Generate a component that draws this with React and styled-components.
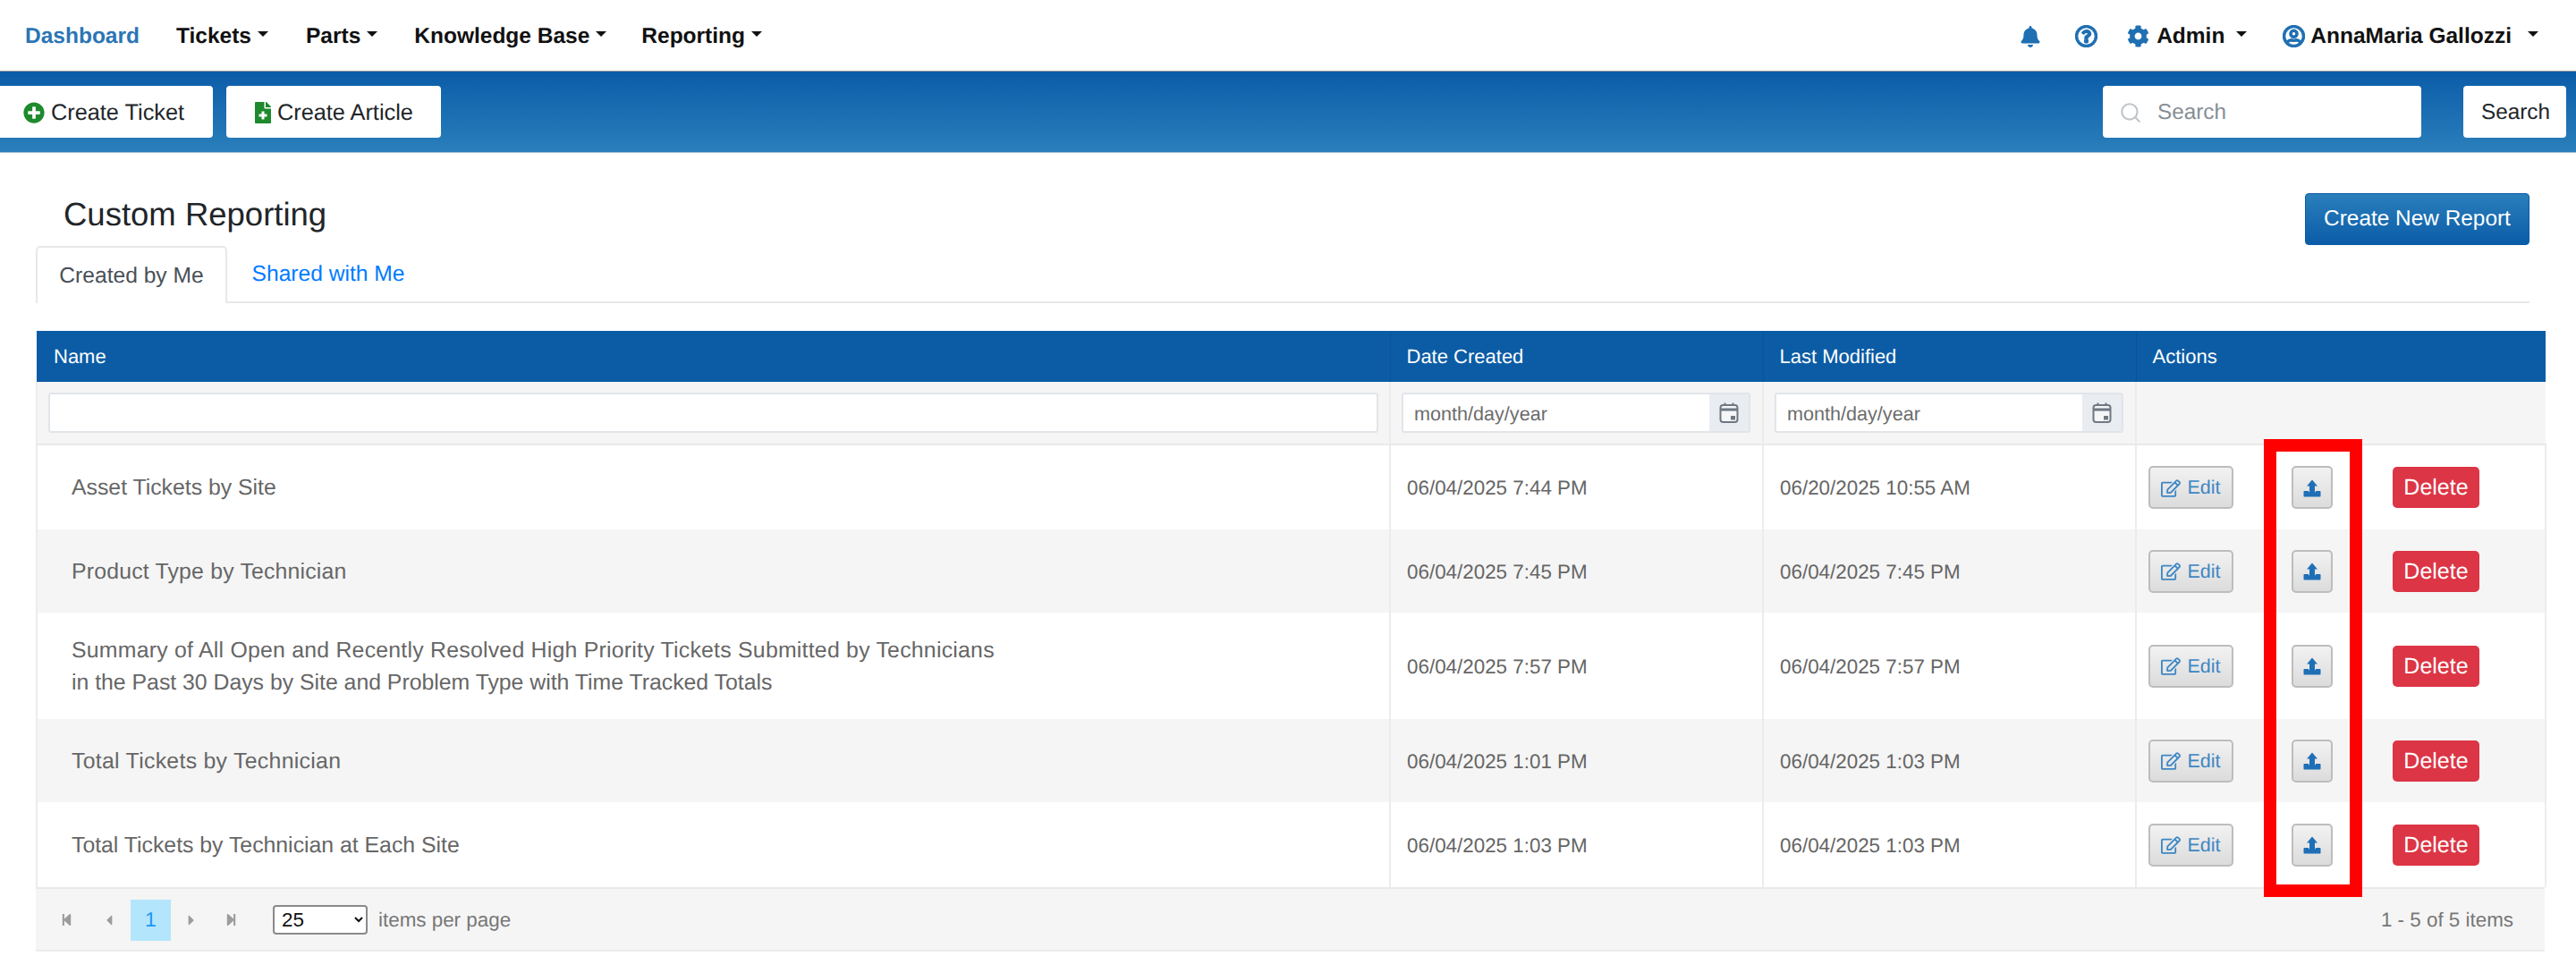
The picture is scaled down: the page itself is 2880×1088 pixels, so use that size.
import styled, { createGlobalStyle } from 'styled-components'
import {
  FaPlusCircle,
  FaFileMedical,
  FaBell,
  FaRegQuestionCircle,
  FaCog,
  FaRegUserCircle,
  FaRegEdit,
  FaStepBackward,
  FaStepForward,
  FaCaretLeft,
  FaCaretRight,
} from 'react-icons/fa'
import { FiSearch } from 'react-icons/fi'

const GlobalStyle = createGlobalStyle`
  html, body {
    margin: 0;
    padding: 0;
    background: #ffffff;
  }
  body {
    font-family: "Liberation Sans", Arial, sans-serif;
    color: #212529;
    text-rendering: geometricPrecision;
  }
`

const Page = styled.div`
  width: 2880px;
  height: 1088px;
  overflow: hidden;
`

const TopNav = styled.nav`
  box-sizing: border-box;
  height: 80px;
  display: flex;
  align-items: center;
  padding: 2px 0 0 28px;
  border-bottom: 1px solid #9a9a9a;
  font-size: 24.5px;
  font-weight: 700;
`

const NavLink = styled.span`
  display: flex;
  align-items: center;
  margin-left: ${(props) => props.$left || 0}px;
  color: ${(props) => (props.$active ? '#2b75b5' : '#111111')};
`

const Caret = styled.i`
  display: inline-block;
  margin-left: ${(props) => props.$left || 7}px;
  margin-top: -5px;
  border-top: 6px solid #111111;
  border-left: 6px solid transparent;
  border-right: 6px solid transparent;
`

const NavRight = styled.div`
  display: flex;
  align-items: center;
  margin-left: auto;
  padding-right: 42px;
`

const NavIcon = styled.span`
  display: inline-flex;
  align-items: center;
  color: #1f6fb2;
  font-size: ${(props) => props.$size || 24}px;
  margin-left: ${(props) => props.$left || 0}px;
  margin-right: ${(props) => props.$right || 0}px;
  svg {
    stroke: currentColor;
    stroke-width: ${(props) => (props.$bold ? 24 : 0)}px;
  }
`

const Toolbar = styled.div`
  box-sizing: border-box;
  height: 91px;
  display: flex;
  align-items: center;
  background: linear-gradient(180deg, #0b5ca8 0%, #2a7fbb 100%);
  border-bottom: 1px solid #9fc3dd;
`

const ToolButton = styled.div`
  box-sizing: border-box;
  display: flex;
  align-items: center;
  height: 58px;
  width: ${(props) => props.$width}px;
  margin-left: ${(props) => props.$left || 0}px;
  padding-left: ${(props) => props.$pad}px;
  padding-top: 2px;
  gap: 7px;
  background: #ffffff;
  border-radius: ${(props) => (props.$flush ? '0 4px 4px 0' : '4px')};
  font-size: 25.3px;
  color: #212529;
`

const ArticleIcon = styled(FaFileMedical)`
  width: 18px;
  height: 24px;
`

const SearchBox = styled.div`
  box-sizing: border-box;
  display: flex;
  align-items: center;
  gap: 17px;
  height: 58px;
  width: 356px;
  margin-left: auto;
  padding: 2px 0 0 18px;
  background: #ffffff;
  border-radius: 4px;
  font-size: 24.3px;
  color: #868e96;
  svg {
    color: #c0c5ca;
  }
`

const SearchButton = styled(ToolButton)`
  margin-right: 11px;
  font-size: 24.3px;
`

const Content = styled.main`
  padding: 45px 35px 0 40px;
`

const TitleRow = styled.div`
  display: flex;
  justify-content: space-between;
  align-items: flex-start;
  height: 59px;
`

const Title = styled.h1`
  margin: 0 0 0 31px;
  padding-top: 3px;
  font-size: 36.5px;
  line-height: 42px;
  font-weight: 400;
  color: #212529;
`

const PrimaryButton = styled.div`
  box-sizing: border-box;
  display: flex;
  align-items: center;
  justify-content: center;
  width: 251px;
  height: 58px;
  margin-right: 17px;
  border-radius: 4px;
  border: 1px solid #0b5ca8;
  background: linear-gradient(180deg, #2a7fbb 0%, #0b5ca8 100%);
  color: #ffffff;
  font-size: 24.4px;
`

const Tabs = styled.div`
  box-sizing: border-box;
  display: flex;
  height: 64px;
  margin-right: 17px;
  border-bottom: 2px solid #e6e8eb;
`

const Tab = styled.div`
  box-sizing: border-box;
  height: 64px;
  width: ${(props) => props.$width}px;
  padding-top: 18px;
  text-align: center;
  font-size: 24.6px;
  line-height: 28px;
  color: ${(props) => (props.$active ? '#495057' : '#007bff')};
  background: ${(props) => (props.$active ? '#ffffff' : 'transparent')};
  border: ${(props) => (props.$active ? '2px solid #e6e8eb' : 'none')};
  border-bottom: none;
  border-radius: 5px 5px 0 0;
`

const TableWrap = styled.div`
  position: relative;
  margin-top: 31px;
  width: 2805px;
`

const Table = styled.table`
  width: 100%;
  table-layout: fixed;
  border-collapse: collapse;
  font-size: 22.4px;
  color: #666666;
`

const HeadCell = styled.th`
  box-sizing: border-box;
  height: 57px;
  padding: 0 0 0 18px;
  text-align: left;
  font-size: 22px;
  font-weight: 400;
  color: #ffffff;
  background: #0b5ca5;
  border-left: 1px solid #0a5494;
  &:first-child {
    border-left: none;
    padding-left: 19px;
  }
`

const FilterCell = styled.td`
  box-sizing: border-box;
  height: 70px;
  padding: 0 13px 0 12px;
  background: #f5f5f5;
  border-bottom: 2px solid #e9e9e9;
  border-left: 2px solid #ececec;
  &:first-child {
    padding: 0 12px;
  }
`

const FilterInput = styled.div`
  box-sizing: border-box;
  display: flex;
  align-items: center;
  height: 45px;
  background: #ffffff;
  border: 2px solid #e1e5ea;
  border-radius: 3px;
  overflow: hidden;
  padding-left: 12px;
  font-size: 21.6px;
  color: #6c6c6c;
`

const DatePlaceholder = styled.span`
  padding-top: 2px;
`

const CalendarAddon = styled.span`
  display: flex;
  align-items: center;
  justify-content: center;
  width: 44px;
  height: 100%;
  margin-left: auto;
  background: #e9edf2;
  color: #6f7780;
`

const Row = styled.tr`
  background: ${(props) => (props.$alt ? '#f5f5f5' : '#ffffff')};
`

const Cell = styled.td`
  box-sizing: border-box;
  height: ${(props) => props.$height}px;
  padding: 2px 0 0 18px;
  border-left: 2px solid #ececec;
  vertical-align: middle;
  &:last-child {
    border-right: 2px solid #ececec;
  }
`

const NameCell = styled(Cell)`
  padding-left: 38px;
  font-size: 24.8px;
  line-height: 36px;
`

const NameLine = styled.div`
  letter-spacing: ${(props) => props.$spacing || 0}px;
`

const ActionGrid = styled.div`
  display: grid;
  grid-template-columns: 160px 113px 97px;
  align-items: center;
`

const ActionCell = styled(Cell)`
  padding: 0 0 0 13px;
`

const GreyButton = styled.div`
  box-sizing: border-box;
  display: flex;
  align-items: center;
  justify-content: center;
  gap: 7px;
  height: 48px;
  width: ${(props) => props.$width}px;
  padding-top: 1px;
  background: linear-gradient(180deg, #f2f2f2 0%, #dcdcdc 100%);
  border: 2px solid #bdbdbd;
  border-radius: 5px;
  color: #3d87c4;
  font-size: 21.5px;
`

const DeleteButton = styled.div`
  box-sizing: border-box;
  display: flex;
  align-items: center;
  justify-content: center;
  height: 46px;
  width: 97px;
  padding-top: 1px;
  background: #dc3545;
  border-radius: 5px;
  color: #ffffff;
  font-size: 25px;
`

const Footer = styled.div`
  box-sizing: border-box;
  display: flex;
  align-items: center;
  height: 72px;
  padding: 1px 35px 0 12px;
  background: #f5f5f5;
  border-top: 2px solid #e9e9e9;
  border-bottom: 2px solid #ececec;
  font-size: 22.4px;
  color: #777777;
`

const PageArrow = styled.span`
  display: flex;
  align-items: center;
  justify-content: center;
  width: ${(props) => props.$width || 45}px;
  color: #9c9c9c;
  font-size: 15px;
`

const CurrentPage = styled.span`
  display: flex;
  align-items: center;
  justify-content: center;
  width: 45px;
  height: 46px;
  background: #b3e5fc;
  color: #2196f3;
  font-size: 23px;
`

const PageSelect = styled.select`
  box-sizing: border-box;
  width: 106px;
  height: 33px;
  margin: 0 12px 0 24px;
  padding-left: 4px;
  border: 2px solid #8a8a8a;
  border-radius: 4px;
  background: #ffffff;
  font-family: "Liberation Sans", Arial, sans-serif;
  font-size: 22.4px;
  color: #111111;
`

const ItemCount = styled.span`
  margin-left: auto;
`

const HighlightBox = styled.div`
  position: absolute;
  left: 2491px;
  top: 121px;
  box-sizing: border-box;
  width: 110px;
  height: 512px;
  border: 14px solid #ff0000;
  pointer-events: none;
`

const CalendarIcon = () => (
  <svg width="22" height="23" viewBox="0 0 22 23" fill="none" stroke="currentColor" strokeWidth="2">
    <rect x="1.5" y="3" width="19" height="19" rx="3" fill="#f4f6f8" />
    <path d="M1.5 8h19" strokeWidth="3" />
    <path d="M6.5 0.5v3M15.5 0.5v3" />
    <rect x="13" y="15" width="5" height="4.5" fill="currentColor" stroke="none" />
  </svg>
)

const ExportIcon = () => (
  <svg width="20" height="20" viewBox="0 0 20 20" fill="#1f6fb6">
    <path d="M10 .5 16 7.5H13V15H7V7.5H4Z" />
    <path d="M1.5 13H6c0 1 .8 1.5 1.5 1.5h5c.7 0 1.5-.5 1.5-1.5h4.5c.6 0 1 .4 1 1v4.5c0 .6-.4 1-1 1h-17c-.6 0-1-.4-1-1V14c0-.6.4-1 1-1Z" />
  </svg>
)

const reports = [
  { name: ['Asset Tickets by Site'], created: '06/04/2025 7:44 PM', modified: '06/20/2025 10:55 AM', height: 95 },
  { name: ['Product Type by Technician'], spacing: 0.2, created: '06/04/2025 7:45 PM', modified: '06/04/2025 7:45 PM', height: 93 },
  {
    name: [
      'Summary of All Open and Recently Resolved High Priority Tickets Submitted by Technicians',
      'in the Past 30 Days by Site and Problem Type with Time Tracked Totals',
    ],
    spacing: 0.25,
    created: '06/04/2025 7:57 PM',
    modified: '06/04/2025 7:57 PM',
    height: 119,
  },
  { name: ['Total Tickets by Technician'], spacing: 0.3, created: '06/04/2025 1:01 PM', modified: '06/04/2025 1:03 PM', height: 93 },
  { name: ['Total Tickets by Technician at Each Site'], created: '06/04/2025 1:03 PM', modified: '06/04/2025 1:03 PM', height: 95 },
]

export default function App() {
  return (
    <Page>
      <GlobalStyle />
      <TopNav>
        <NavLink $active>Dashboard</NavLink>
        <NavLink $left={41}>Tickets<Caret /></NavLink>
        <NavLink $left={42}>Parts<Caret /></NavLink>
        <NavLink $left={41}>Knowledge Base<Caret /></NavLink>
        <NavLink $left={39}>Reporting<Caret /></NavLink>
        <NavRight>
          <NavIcon $size={24}><FaBell /></NavIcon>
          <NavIcon $size={25} $left={38} $bold><FaRegQuestionCircle /></NavIcon>
          <NavIcon $size={25} $left={33} $right={8}><FaCog /></NavIcon>
          <NavLink>Admin<Caret $left={13} /></NavLink>
          <NavIcon $size={25} $left={40} $right={6} $bold><FaRegUserCircle /></NavIcon>
          <NavLink>AnnaMaria Gallozzi<Caret $left={18} /></NavLink>
        </NavRight>
      </TopNav>

      <Toolbar>
        <ToolButton $width={238} $pad={26} $flush>
          <FaPlusCircle color="#1e8a2e" size={24} />
          Create Ticket
        </ToolButton>
        <ToolButton $width={240} $pad={32} $left={15}>
          <ArticleIcon color="#1e8a2e" />
          Create Article
        </ToolButton>
        <SearchBox>
          <FiSearch size={26} />
          Search
        </SearchBox>
        <SearchButton $width={115} $pad={20} $left={47}>Search</SearchButton>
      </Toolbar>

      <Content>
        <TitleRow>
          <Title>Custom Reporting</Title>
          <PrimaryButton>Create New Report</PrimaryButton>
        </TitleRow>
        <Tabs>
          <Tab $active $width={214}>Created by Me</Tab>
          <Tab $width={226}>Shared with Me</Tab>
        </Tabs>

        <TableWrap>
          <Table>
            <colgroup>
              <col width="1513" />
              <col width="417" />
              <col width="417" />
              <col width="458" />
            </colgroup>
            <thead>
              <tr>
                <HeadCell>Name</HeadCell>
                <HeadCell>Date Created</HeadCell>
                <HeadCell>Last Modified</HeadCell>
                <HeadCell>Actions</HeadCell>
              </tr>
              <tr>
                <FilterCell><FilterInput /></FilterCell>
                <FilterCell>
                  <FilterInput>
                    <DatePlaceholder>month/day/year</DatePlaceholder>
                    <CalendarAddon><CalendarIcon /></CalendarAddon>
                  </FilterInput>
                </FilterCell>
                <FilterCell>
                  <FilterInput>
                    <DatePlaceholder>month/day/year</DatePlaceholder>
                    <CalendarAddon><CalendarIcon /></CalendarAddon>
                  </FilterInput>
                </FilterCell>
                <FilterCell />
              </tr>
            </thead>
            <tbody>
              {reports.map((report, index) => (
                <Row key={report.name[0]} $alt={index % 2 === 1}>
                  <NameCell $height={report.height}>
                    {report.name.map((line, lineIndex) => (
                      <NameLine key={line} $spacing={lineIndex === 0 ? report.spacing : 0}>{line}</NameLine>
                    ))}
                  </NameCell>
                  <Cell $height={report.height}>{report.created}</Cell>
                  <Cell $height={report.height}>{report.modified}</Cell>
                  <ActionCell $height={report.height}>
                    <ActionGrid>
                      <GreyButton $width={95}>
                        <FaRegEdit size={22} />
                        Edit
                      </GreyButton>
                      <GreyButton $width={46}><ExportIcon /></GreyButton>
                      <DeleteButton>Delete</DeleteButton>
                    </ActionGrid>
                  </ActionCell>
                </Row>
              ))}
            </tbody>
          </Table>
          <Footer>
            <PageArrow><FaStepBackward /></PageArrow>
            <PageArrow $width={49}><FaCaretLeft size={18} /></PageArrow>
            <CurrentPage>1</CurrentPage>
            <PageArrow><FaCaretRight size={18} /></PageArrow>
            <PageArrow><FaStepForward /></PageArrow>
            <PageSelect defaultValue="25">
              <option value="25">25</option>
              <option value="50">50</option>
              <option value="100">100</option>
            </PageSelect>
            items per page
            <ItemCount>1 - 5 of 5 items</ItemCount>
          </Footer>
          <HighlightBox />
        </TableWrap>
      </Content>
    </Page>
  )
}
